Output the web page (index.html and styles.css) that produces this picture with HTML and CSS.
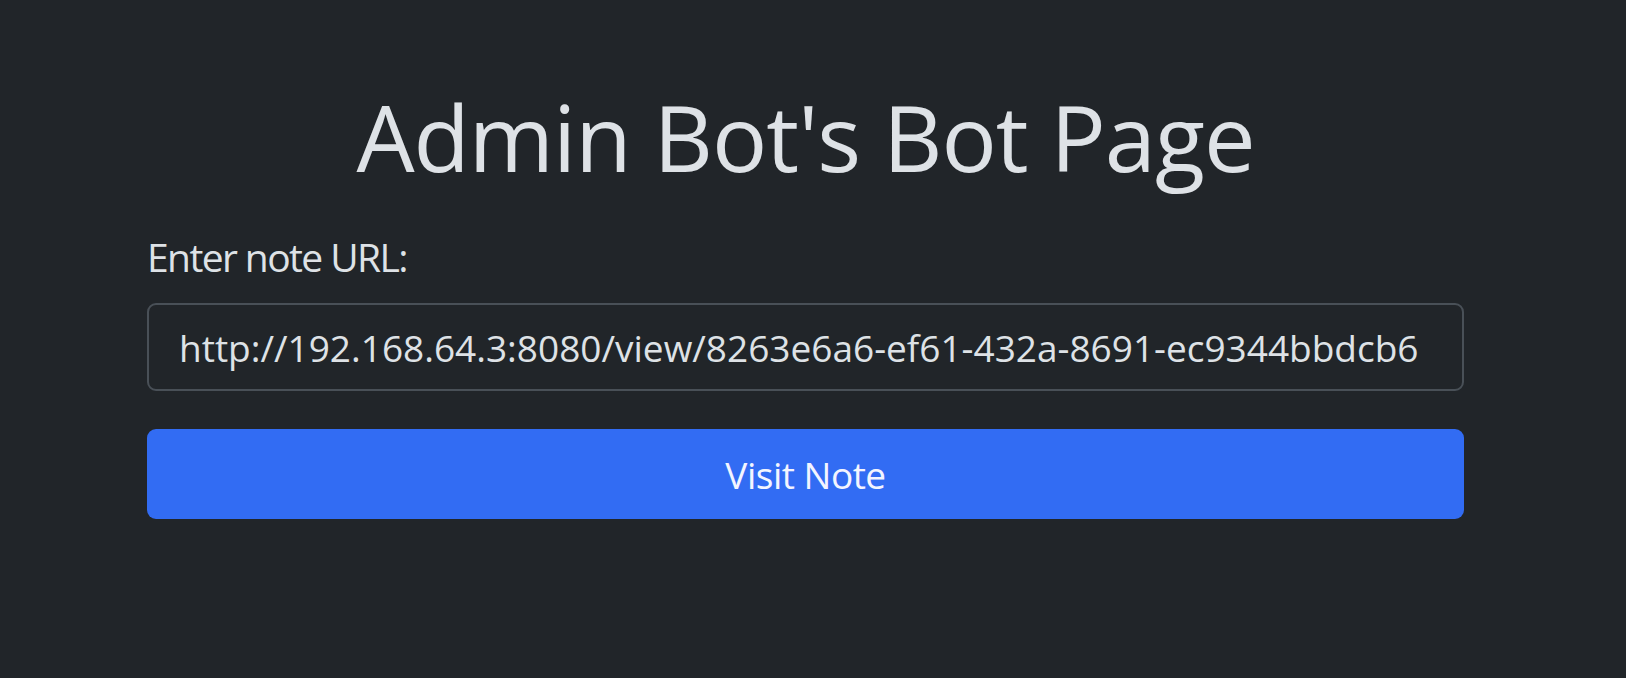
FILE: index.html
```html
<!DOCTYPE html>
<html lang="en">
<head>
<meta charset="utf-8">
<title>Admin Bot's Bot Page</title>
<link rel="stylesheet" href="styles.css">
</head>
<body>
<main class="container">
  <h1 class="title">Admin Bot's Bot Page</h1>
  <form class="form">
    <label class="label" for="url">Enter note URL:</label>
    <input class="input" id="url" type="text" value="http://192.168.64.3:8080/view/8263e6a6-ef61-432a-8691-ec9344bbdcb6">
    <button class="btn" type="button">Visit Note</button>
  </form>
</main>
</body>
</html>
```

FILE: styles.css
```css
html, body {
  margin: 0;
  padding: 0;
  background: #212529;
  height: 100%;
}
body {
  font-family: "Open Sans", "Noto Sans", sans-serif;
  color: #dee2e6;
}
.container {
  width: 1317px;
  margin-left: 147px;
  padding-top: 82px;
  display: flex;
  flex-direction: column;
}
.title {
  margin: 0;
  font-size: 92px;
  font-weight: 400;
  line-height: 110px;
  text-align: center;
  color: #dee2e6;
  letter-spacing: -1px;
}
.form {
  display: flex;
  flex-direction: column;
  margin-top: 36px;
}
.label {
  font-size: 39px;
  line-height: 58px;
  letter-spacing: -1.6px;
  color: #dee2e6;
}
.input {
  margin-top: 17px;
  box-sizing: border-box;
  height: 88px;
  padding: 0 30px;
  background: #212529;
  border: 2px solid #495057;
  border-radius: 9px;
  color: #dee2e6;
  font-family: "Open Sans", "Noto Sans", sans-serif;
  font-size: 37px;
  outline: none;
}
.btn {
  margin-top: 38px;
  height: 90px;
  border: 0;
  border-radius: 9px;
  background: #326cf3;
  color: #f3f5ff;
  font-family: "Open Sans", "Noto Sans", sans-serif;
  font-size: 37px;
  letter-spacing: -0.5px;
}
```
